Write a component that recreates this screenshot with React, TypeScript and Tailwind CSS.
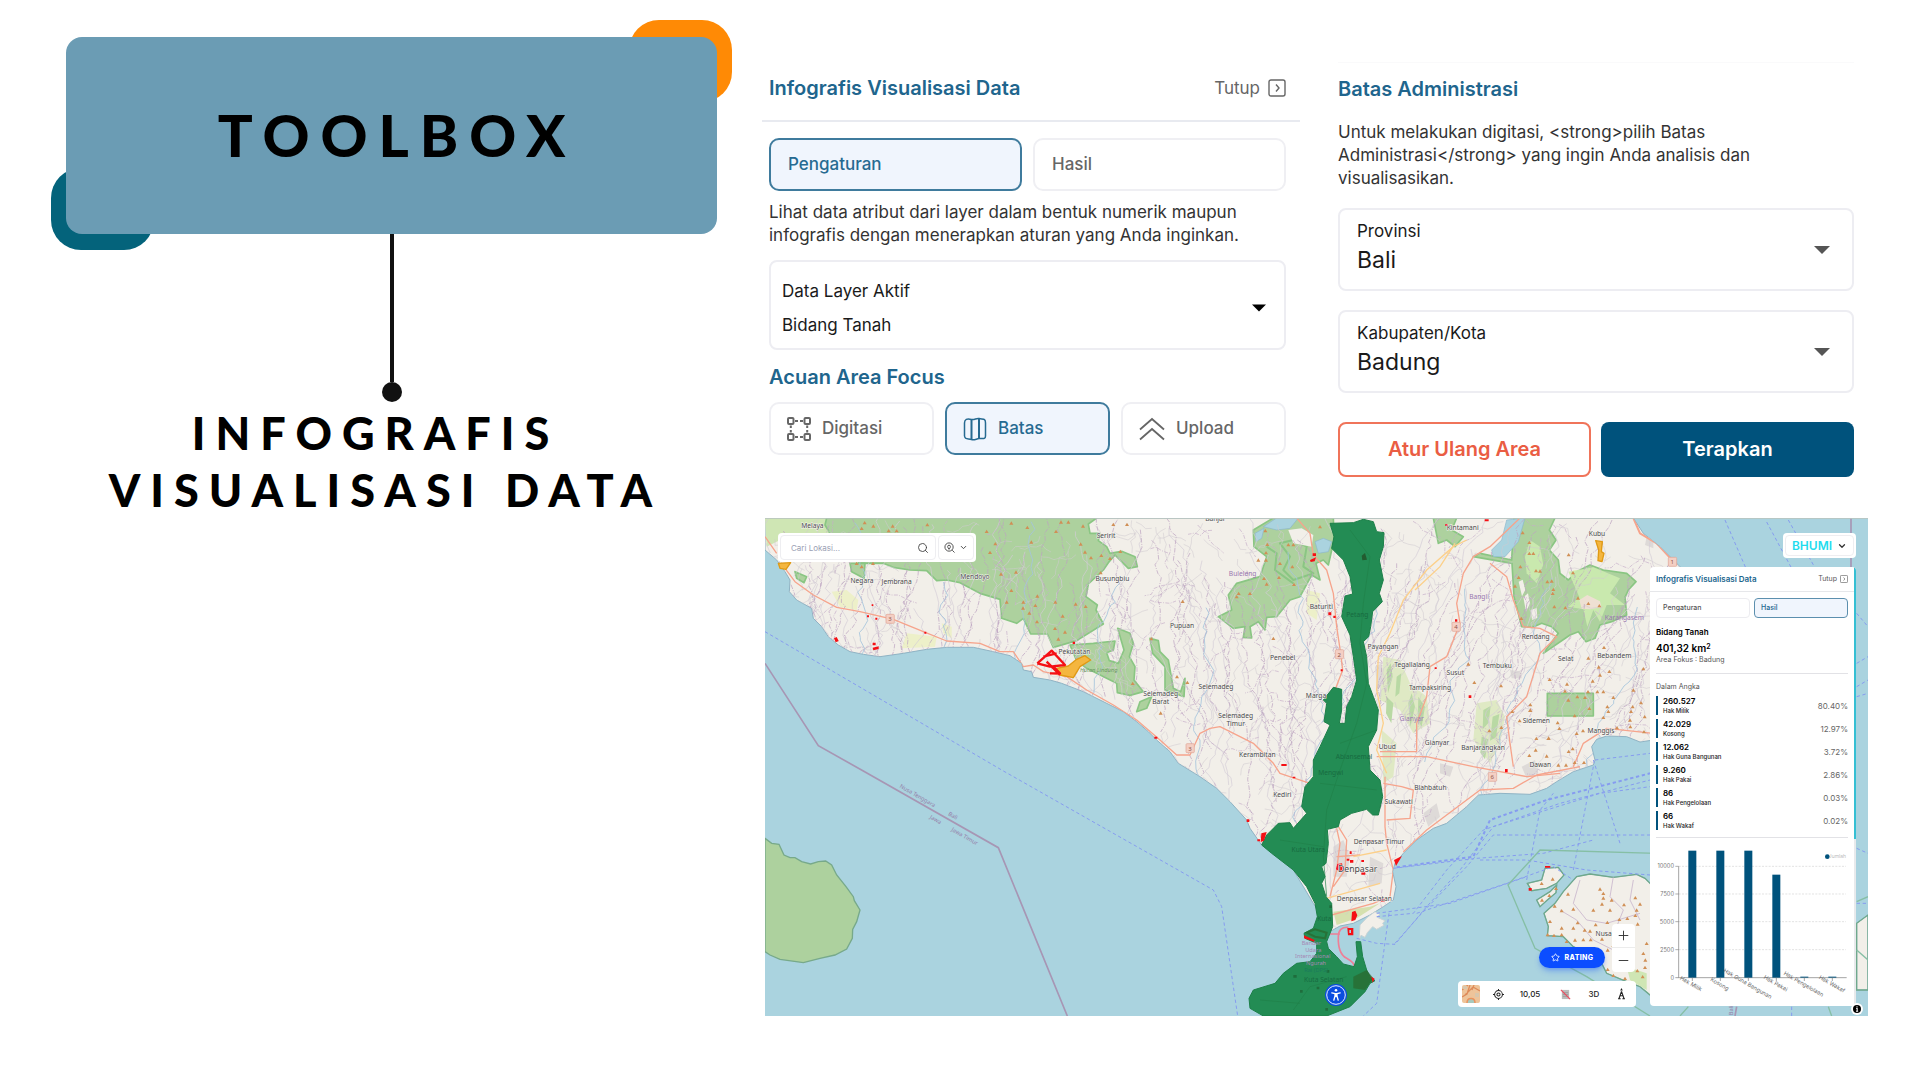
import React, { useId } from "react";
import { ChevronDown, Minus, Plus, Search, Star } from "lucide-react";

const INTER = "font-['Inter',sans-serif]";
const TAB_ON = "border-2 border-[#3f7b9d] bg-[#f0f5fd] text-[#266a91]";
const TAB_OFF = "border-2 border-[#efeff3] bg-white text-[#666]";

/* ---------- Map drawing ---------- */

function makeRandom(seed: number) {
  let s = seed;
  return () => {
    s = (s * 1664525 + 1013904223) % 4294967296;
    return s / 4294967296;
  };
}

function wander(seed: number, step: number, drift: number) {
  const r = makeRandom(seed);
  const out: string[] = [];
  for (let x = 20; x < 2760; x += step) {
    let cx = x + r() * 20;
    let y = r() * 300;
    const end = y + 250 + r() * 800;
    const lean = x > 1750 ? -0.35 : x > 1170 ? 0.12 : -0.05;
    let d = `M${cx.toFixed(0)} ${y.toFixed(0)}`;
    while (y < end) {
      const dy = 8 + r() * 20;
      y += dy;
      cx += (r() - 0.5) * drift + lean * dy;
      d += `L${cx.toFixed(0)} ${y.toFixed(0)}`;
    }
    out.push(d);
  }
  return out.join("");
}

function lanes(seed: number, count: number, reach: number) {
  const r = makeRandom(seed);
  let d = "";
  for (let i = 0; i < count; i++) {
    let x = r() * 2700;
    let y = 30 + r() * 1170;
    const heading = r() * Math.PI;
    d += `M${x.toFixed(0)} ${y.toFixed(0)}`;
    const n = 3 + Math.floor(r() * 5);
    for (let k = 0; k < n; k++) {
      const a = heading + (r() - 0.5) * 1.6;
      x += Math.cos(a) * reach;
      y += Math.sin(a) * reach;
      d += `L${x.toFixed(0)} ${y.toFixed(0)}`;
    }
  }
  return d;
}

const BORDERS = wander(7, 36, 30);
const TRACKS = wander(31, 48, 34);
const RIVERS = wander(93, 260, 30);
const LANES = lanes(5, 560, 18);
const PURPLE_LANES = lanes(77, 260, 20);

const LAND =
  "M15 24V120L50 150 75 185 90 210 88 245 110 270 155 295 160 325 185 350 205 380 235 405 270 425 310 433 360 440 430 430 500 418 560 412 640 412 700 425 750 437 785 460 790 480 815 485 820 502 870 510 905 520 970 545 1020 570 1090 605 1130 635 1165 665 1190 690 1230 725 1255 760 1320 800 1370 835 1410 875 1460 930 1470 955 1505 1005 1600 1080 1660 1180 1715 1262 1740 1248 1780 1240 1830 1215 1870 1190 1900 1170 1908 1130 1898 1085 1905 1060 1930 1030 1970 990 2020 955 2060 940 2120 890 2155 855 2220 850 2310 853 2360 835 2390 815 2440 785 2500 765 2505 750 2495 710 2510 688 2540 678 2600 680 2640 696 2680 690 2760 690V170L2700 110 2650 70 2620 24Z";

const PENIDA =
  "M2352 1210L2385 1180 2410 1145 2450 1100 2490 1092 2560 1102 2630 1093 2655 1105 2700 1150V1480L2640 1430 2600 1415 2540 1390 2520 1350 2440 1310 2410 1280 2362 1277 2365 1250Z";
const SMALL_ISLES =
  "M2302 1120L2345 1110 2355 1075 2395 1072 2412 1095 2390 1120 2360 1135 2315 1142ZM2330 1170L2370 1145 2390 1125 2388 1148 2362 1170 2340 1190ZM3290 1240L3324 1215V1440H3290Z";

const BADUNG =
  "M540 40L610 38 640 28 670 35 680 65 702 68 700 110 688 150 694 180 700 210 688 250 697 275 668 305 662 350 656 380 640 395 650 440 655 520 670 560 685 600 680 660 655 710 660 780 690 810 698 860 685 915 668 915 650 898 605 910 570 930 565 950 532 958 535 1000 528 1060 515 1070 525 1100 515 1120 528 1160 545 1180 548 1250 530 1295 535 1315 560 1340 580 1362 612 1370 622 1340 618 1295 632 1295 638 1340 650 1380 660 1400 675 1412 660 1420 645 1445 600 1490 530 1518H340L300 1495 297 1465 310 1440 375 1420 400 1390 440 1360 480 1355 500 1330 500 1300 465 1285 462 1270 490 1255 502 1220 495 1180 470 1130 430 1080 365 1030 335 1005 350 975 385 940 420 938 430 955 470 910 455 890 465 830 490 800 490 750 510 710 540 645 522 635 530 580 520 570 550 532 575 538 575 600 568 640 585 640 590 590 605 560 620 510 610 440 600 375 575 320 585 258 608 252 600 200 580 150 545 115 552 80Z";

const FORESTS = [
  "M200 24L195 45 210 70 300 160 370 160 400 172 450 180 500 182 530 212 560 210 600 218 660 250 720 268 725 325 770 340 790 325 812 372 862 372 880 412 950 392 1030 342 1008 300 1012 285 978 260 985 222 1030 180 1045 158 1065 135 1105 175 1132 170 1125 140 1085 124 1050 130 1040 110 1015 92 1020 70 990 70 985 42 1010 24Z",
  "M930 405L1000 400 1065 393 1060 420 1040 428 1048 452 1075 460 1092 420 1073 355 1110 370 1120 400 1108 440 1125 470 1122 510 1150 545 1110 556 1072 548 1070 520 1010 490 980 475 950 452Z",
  "M1130 605L1140 575 1175 560 1160 595Z",
  "M1480 60L1540 24H1720L1722 90 1705 165 1690 150 1668 160 1680 210 1655 195 1620 260 1590 270 1550 320 1520 322 1515 360 1495 335 1470 350 1475 384 1450 382 1455 350 1420 355 1375 320 1415 300 1405 255 1430 220 1500 200 1520 140 1482 110Z",
  "M2020 24H2090L2075 60 2110 80 2085 110 2060 90 2035 100Z",
  "M2262 24H2385L2368 60 2388 90 2368 120 2395 150 2400 190 2425 210 2450 185 2490 165 2530 180 2600 190 2628 215 2605 240 2595 262 2600 315 2555 335 2520 345 2505 385 2478 395 2455 365 2430 375 2350 430 2395 370 2375 350 2345 340 2318 352 2285 350 2262 260 2256 160 2140 140 2160 130 2255 150Z",
  "M2362 550H2500V618H2362Z",
  "M1170 385L1195 392 1200 425 1225 450 1240 535 1262 545 1275 505 1272 560 1215 540 1215 470 1178 430Z",
  "M105 185L140 200 132 218 110 205ZM270 160H315L312 205 275 185Z",
];

const PEAKS =
  "314 38 340 48 398 48 305 55 386 62 410 62 502 44 680 64 754 39 802 52 706 101 690 127 814 96 888 64 903 36 925 36 969 48 1060 43 1101 43 962 102 975 126 1024 136 993 143 1081 124 1050 145 768 186 723 192 754 241 832 258 740 276 790 276 826 286 789 294 808 309 886 276 947 282 977 289 908 318 831 335 885 355 915 366 895 387 1022 188 1174 386 1118 520 290 160 339 160 305 170 1202 609 1251 500 1282 517 1268 274 1540 385 1430 260 1436 250 1470 250 1518 150 1512 205 1557 202 1520 222 1602 223 1597 170 1560 160 1585 104 1600 104 1522 103 1518 128 1495 150 1516 62 1680 50 2125 462 2143 517 2223 527 2188 662 2224 652 2311 584 2310 601 2279 632 2329 685 2327 720 2308 736 2360 738 2366 684 2257 604 2288 68 2308 97 2308 130 2320 130 2328 182 2340 183 2362 215 2375 213 2380 238 2378 250 2383 290 2416 293 2454 264 2485 280 2518 287 2426 134 2439 188 2281 170 2276 202 2265 228 2284 325 2532 412 2485 444 2516 471 2548 484 2520 495 2498 513 2484 545 2512 545 2530 545 2542 590 2560 562 2620 540 2643 578 2618 590 2613 604 2654 620 2610 630 2611 650 2652 665 2571 653 2530 622 2444 617 2469 662 2450 670 2393 638 2365 685 2398 655 2438 716 2426 724 2395 765 2418 765 2444 757 2472 757 2311 600 2425 570 2452 560 2475 562 2488 595 2545 604 2415 543 2421 522 2369 508 2650 476 2345 1120 2378 1107 2368 1156 2388 1135 2346 1170 2384 1188 2424 1152 2520 1137 2530 1150 2530 1164 2526 1182 2555 1170 2592 1184 2626 1163 2640 1182 2630 1200 2626 1216 2500 1200 2550 1200 2440 1197 2405 1202 2370 1234 2363 1274 2382 1276 2405 1274 2405 1254 2440 1254 2453 1238 2474 1260 2490 1263 2507 1244 2542 1237 2578 1228 2602 1225 2633 1242 2420 1294 2445 1290 2470 1289 2492 1289 2526 1287 2543 1320 2560 1306 2650 1330 2656 1350 2660 1300 2543 1378 2560 1396 2632 1382 2648 1400 2655 1372 2595 1405"
    .split(" ")
    .map(Number);

let peakPath = "";
for (let i = 0; i < PEAKS.length; i += 2) {
  peakPath += `M${PEAKS[i]} ${PEAKS[i + 1] - 5}l6 10h-12z`;
}

const PLACES: [string, number, number, number?][] = [
  ["Melaya", 157, 55], ["Negara", 306, 220], ["Jembrana", 410, 221], ["Mendoyo", 645, 206], ["Seririt", 1038, 84],
  ["Busungbiu", 1057, 214], ["Pekutatan", 943, 432], ["Banjar", 1366, 34], ["Pupuan", 1266, 354], ["Baturiti", 1684, 298],
  ["Penebel", 1568, 449], ["Selemadeg", 1368, 538], ["Selemadeg", 1202, 558], ["Barat", 1202, 581], ["Selemadeg", 1427, 625],
  ["Timur", 1427, 648], ["Kerambitan", 1492, 742], ["Marga", 1668, 565], ["Payangan", 1869, 418], ["Tegallalang", 1956, 472],
  ["Susut", 2086, 496], ["Tembuku", 2212, 473], ["Tampaksiring", 2010, 541], ["Ubud", 1882, 718], ["Gianyar", 2031, 706],
  ["Banjarangkan", 2169, 720], ["Kintamani", 2108, 60], ["Rendang", 2327, 386], ["Selat", 2417, 454], ["Bebandem", 2563, 443],
  ["Sidemen", 2329, 638], ["Manggis", 2523, 670], ["Dawan", 2341, 771], ["Kubu", 2511, 77], ["Kediri", 1567, 861],
  ["Sukawati", 1916, 881], ["Blahbatuh", 2011, 841], ["Denpasar Timur", 1857, 1003], ["Denpasar Selatan", 1813, 1172],
  ["Denpasar", 1793, 1085, 26], ["Nusa", 2531, 1278],
];

const REGIONS: [string, number, number][] = [
  ["Buleleng", 1448, 198], ["Bangli", 2157, 267], ["Gianyar", 1955, 633], ["Karangasem", 2593, 329],
];

const GREEN_PLACES: [string, number, number][] = [
  ["Petang", 1792, 320], ["Abiansemal", 1782, 746], ["Mengwi", 1712, 796], ["Kuta Utara", 1645, 1026], ["Kuta", 1693, 1234], ["Kuta Selatan", 1691, 1416],
];

const SHIELDS: [string, number, number][] = [
  ["3", 390, 327], ["3", 1290, 715], ["2", 1738, 433], ["4", 2088, 351], ["6", 2197, 801], ["1", 2737, 156],
];

function BaliMap() {
  return (
    <svg viewBox="15 24 3309 1494" preserveAspectRatio="xMidYMid slice" className="block size-full bg-[#aad3df]" role="img" aria-label="Peta Bali">
      <defs>
        <clipPath id="land"><path d={LAND} /></clipPath>
        <clipPath id="penida"><path d={PENIDA} /></clipPath>
      </defs>

      <path d={LAND + PENIDA + SMALL_ISLES} fill="#f2efe9" stroke="#8fb3c4" strokeWidth="3" />
      <path d={PENIDA + SMALL_ISLES} fill="none" stroke="#6fa98c" strokeWidth="4" />

      <g clipPath="url(#land)">
        <path d="M15 24H210L225 75 200 100 60 90 20 110Z" fill="#cfe6b4" />
        <g fill="#edf0c9">
          <path d="M215 245L260 240 295 270 290 300 240 290Z" />
          <path d="M440 370L530 380 525 410 425 415Z" />
          <path d="M545 340L575 350 575 385 550 370Z" />
          <path d="M1640 240L1680 250 1670 330 1640 310Z" />
          <path d="M2440 180L2560 190 2540 240 2460 300 2420 240Z" />
        </g>
        <g fill="#dfe9c4">
          <path d="M1870 440L1920 450 1950 520 2000 560 2010 640 1960 670 1920 600 1860 570Z" />
          <path d="M1865 660L1910 700 1900 800 1870 820Z" />
          <path d="M2150 580L2210 570 2235 620 2220 700 2190 760 2140 690Z" />
        </g>
        <path d="M1720 1205L1830 1190 1860 1180 1790 1225 1730 1245Z" fill="#d5e0ae" />
        <g fill="#b9d9a4">
          <path d="M1880 480l12 -20 6 40 -14 50zM1910 500l14 -10 -6 60 -12 10zM1945 580l10 -30 10 40 -14 60zM1975 560l20 30 -10 60 -12 -20zM1880 560l20 20 -6 60 -16 -30zM2170 600l22 -12 -6 50 -18 20zM2198 620l20 -8 -10 70 -18 10zM2165 680l20 8 -10 60 -14 -20z" />
        </g>
        {FORESTS.map((d) => (
          <path key={d} d={d} fill="#add19e" stroke="#8ac683" strokeWidth="5" strokeLinejoin="round" />
        ))}
        <path d="M1560 100L1600 90 1640 110 1630 170 1660 190 1600 210 1570 180 1590 140ZM1520 110L1550 130 1545 180 1600 220" fill="none" stroke="#8ac683" strokeWidth="6" strokeLinejoin="round" />
        <path d="M1585 60L1625 55 1660 75 1655 110 1600 100Z" fill="#f2efe9" />
        <g fill="#cdebb0" opacity="0.9">
          <path d="M2425 185L2500 172 2580 205 2550 250 2595 285 2540 285 2520 335 2500 300 2482 350 2470 298 2425 290 2458 262Z" />
          <path d="M2310 90L2340 110 2350 165 2330 220 2300 190 2295 140Z" />
        </g>
        <g fill="#f2efe9">
          <path d="M2276 215l12 -6 8 30 -10 20zM2290 262l14 -12 6 30 -12 26zM2312 300l18 -6 2 30 -16 6z" />
        </g>
        <path d="M2458 270L2482 255 2520 274 2524 292 2490 298 2465 296Z" fill="#eee0d2" />
        <g fill="#aad3df" stroke="#8db7cc" strokeWidth="2">
          <path d="M1510 50L1550 24H1615L1590 55 1550 60Z" />
          <path d="M1485 70L1512 55 1505 85 1488 95Z" />
          <path d="M1665 95L1690 85 1715 95 1705 125 1675 130Z" />
          <path d="M2240 30L2295 24 2275 95 2235 140 2200 140 2195 120 2225 90Z" />
        </g>
        <g fill="#dedad8">
          <path d="M1845 470l20 -10 5 60 -18 20zM1990 910l40 -30 10 40 -35 30zM2040 760l40 10 -10 30 -30 -10zM2285 770l40 -20 10 40 -35 15zM1720 1010l30 -20 20 50 -10 60 -40 0zM1830 1040l40 20 -5 60 -40 10zM2250 480l35 5 0 20 -30 0zM2660 80l20 5 0 30 -25 -10z" />
        </g>
        <path d={LANES} fill="none" stroke="#cfcad0" strokeWidth="2" opacity="0.8" />
        <path d={TRACKS} fill="none" stroke="#d3ccd6" strokeWidth="2.5" opacity="0.8" />
        <path d={PURPLE_LANES} fill="none" stroke="#c5adc8" strokeWidth="2.5" strokeDasharray="12 4 3 4" opacity="0.8" />
        <path d={BORDERS} fill="none" stroke="#bda3c1" strokeWidth="2.5" strokeDasharray="14 4 3 4" opacity="0.85" />
        <path d={RIVERS} fill="none" stroke="#a5c4dc" strokeWidth="2.5" />
        <g fill="none" stroke="#f6a48c" strokeWidth="4" strokeLinejoin="round">
          <path d="M15 80L50 130M75 175L105 215 160 255 230 292 300 305 400 328 490 365 560 393 660 400 720 425 760 425 790 470 820 465 850 485 920 500 980 540 1060 585 1130 630 1200 690 1250 735 1290 735 1320 670 1350 655 1380 650 1440 680 1480 700 1540 760 1560 790 1650 820" />
          <path d="M1610 24L1650 70 1660 135 1700 180 1720 250 1730 350 1742 430 1748 480 1725 540" />
          <path d="M2280 24L2190 110 2140 140 2110 190 2090 280 2100 340 2060 440 2010 470 2000 560 1970 640 1970 725 1860 725" />
          <path d="M2190 160L2240 200 2260 270 2290 350 2340 355 2390 380 2340 430 2300 560 2240 620 2250 700 2260 770" />
          <path d="M1850 740L2000 740 2140 770 2300 800 2400 790" />
          <path d="M1870 820L1925 830 1960 840 1950 925 1880 930M1875 800L1875 950 1880 1000 1900 1080 1890 1160" />
          <path d="M1930 1025L2000 960 2080 900 2160 840 2260 835 2330 795 2460 770" />
          <path d="M1730 955L1740 1000 1730 1080 1710 1160M1735 950L1760 990 1755 1080 1720 1130M1715 1215L1840 1180 1875 1165M1730 1040L1800 1035" />
          <path d="M2440 770L2470 700 2540 655 2680 670" />
          <path d="M2620 24L2640 70 2690 100 2750 165" strokeWidth="6" />
        </g>
        <path d="M2120 90L2080 110 2000 180 1930 270 1890 370 1855 440 1850 540 1870 640 1850 720 1880 790" fill="none" stroke="#fcd08a" strokeWidth="4" />
        <path d="M2085 100L2040 170 1965 240M1780 1040L1880 1020M1700 1165L1860 1120" fill="none" stroke="#fcd08a" strokeWidth="4" />
      </g>

      <g clipPath="url(#penida)" fill="none" stroke="#c9b6cc" strokeWidth="2.5">
        <path d="M2560 1100L2550 1160 2590 1200 2570 1250 2620 1290M2460 1110L2440 1180 2480 1230 2540 1240 2640 1210M2400 1200L2450 1230 2500 1290 2580 1330M2620 1110L2610 1170 2640 1230" />
        <path d="M2600 1370l60 20v50l-50 -30z" fill="#cfe6b4" stroke="none" />
      </g>

      <path d="M1797 1290L1800 1245 1822 1222 1845 1205 1860 1212 1852 1222 1875 1232 1868 1240 1872 1246 1850 1258 1838 1250 1822 1268 1815 1282 1803 1276Z" fill="#f2efe9" stroke="#c8d3d5" strokeWidth="3" />
      <path d="M1710 1272H1740M1765 1252Q1735 1250 1735 1280Q1733 1330 1760 1345T1782 1372" fill="none" stroke="#ef7f97" strokeWidth="5" />
      <path d="M15 985L35 1000 57 1003 72 1035 90 1043 105 1043 125 1055 152 1062 175 1055 197 1053 215 1065 230 1095 258 1130 280 1160 283 1172 300 1200 290 1235 278 1258 277 1285 260 1317 225 1335 180 1345 130 1358 60 1348 30 1335 15 1325Z" fill="#add19e" stroke="#77a98a" strokeWidth="4" />

      <g fill="none" stroke="#869cf0" strokeWidth="3" strokeDasharray="10 8">
        <path d="M15 365L725 780 1360 1140 1385 1190 1433 1518" />
        <path d="M1900 1075L2150 1045 2350 1030 2500 990" />
        <path d="M1910 1072L2140 1040 2190 930 2360 870 2670 790" strokeWidth="6" />
        <path d="M1850 1220L1960 1210 2060 1080 2170 960 2400 880 2670 810" />
        <path d="M1790 1285L1850 1300 1905 1303 2000 1190 2100 1080 2200 950 2520 850 2670 830" />
        <path d="M1905 1300L1985 1210 2120 1070 2200 975 2670 975" />
        <path d="M1850 1210L2070 1180 2300 1100M1970 1210L2240 1120 2380 1070 2440 1110" />
        <path d="M2160 1050L2300 1050 2480 1080 2670 1095M2300 1110L2340 900 2380 850" />
        <path d="M2440 1080L2500 770M2500 750L2580 1000M2505 750L2670 730" />
        <path d="M1887 1210L1850 1480 1810 1518M3095 1518V1490" />
        <path d="M3020 36L3130 240M2895 30L2960 180M3085 30L3230 290M3290 310L3324 350M3290 460L3324 440M3290 530L3324 510M3290 560L3324 550" />
        <path d="M3290 1015L3324 1030M3290 1180H3324" />
      </g>
      <g fill="none" stroke="#86bfa5" strokeWidth="4">
        <path d="M2690 1030L2340 1020 2244 1125 2325 1315 2480 1400 2670 1518M3290 1175L3324 1160M3290 1320L3324 1350M2785 1490L2760 1518M3205 1490L3215 1518" />
      </g>
      <g fill="none" stroke="#a796b4" strokeWidth="5">
        <path d="M15 460L175 707 310 783 715 1013 922 1518" />
        <path d="M3273 24V180M2930 1490L2925 1518" />
      </g>

      <path d={peakPath} fill="#d08f55" />

      <g fill="#f4b63f" stroke="#e09a14" strokeWidth="4" strokeLinejoin="round">
        <path d="M890 475L925 468 950 448 975 437 992 450 960 470 940 503 900 495Z" />
        <path d="M2507 92L2527 95 2524 125 2532 130 2526 155 2514 152 2516 120Z" />
        <path d="M55 160L92 158 78 178 60 175Z" />
      </g>
      <g fill="none" stroke="#f50f14" strokeWidth="7" strokeLinejoin="round">
        <path d="M832 460L875 422 915 465 870 470 832 460M850 440L890 430M870 490H900L880 470M860 455L900 495" />
      </g>

      <path d={BADUNG} transform="translate(1170 0)" fill="#238c54" stroke="#1d8049" strokeWidth="3" strokeLinejoin="round" />
      <g fill="none" stroke="#1f8049" strokeWidth="2">
        <path d="M1770 60L1830 140 1810 280 1800 400 1820 520 1790 640 1740 780 1700 900 1690 1040 1700 1160M1740 700L1850 660M1680 820L1850 840M1560 990L1690 1010M1600 1500L1650 1430 1760 1400M1500 1470L1620 1480" />
      </g>
      <path d="M1640 1268L1665 1258 1700 1268 1695 1285 1665 1280Z" fill="none" stroke="#2a6a2f" strokeWidth="6" opacity="0.75" />
      <path d="M1780 1400L1820 1380 1840 1405 1815 1440 1780 1435Z" fill="#2a6a2f" opacity="0.75" />
      <path d="M1805 137l10 -8 6 20 -14 2z" fill="#235c30" />
      <g fill="#1f6d3c">
        <path d="M1600 1395h10v8h-10zM1700 1380h8v8h-8zM1670 1430h8v8h-8zM1696 1494h8v8h-8zM1708 1186h8v8h-8zM1620 1440h8v8h-8z" />
      </g>

      <g fill="#f50f14">
        <path d="M222 385l8 -4 6 12 -9 4zM338 398h9v8h-9zM338 413l18 -4v8l-16 4zM321 316h6v6h-6zM346 323h6v6h-6zM335 283h5v5h-5zM493 365h6v6h-6zM938 395h7v7h-7z" />
        <path d="M1650 150l18 -8 -4 12 -12 2zM1658 130h10v8h-10zM1705 307h9v9h-9zM1720 317h7v7h-7zM1742 478h6v6h-6zM1183 680h9v6h-9zM1564 762h16v6h-16zM1598 800h8v5h-8z" />
        <path d="M1460 928h8v8h-8zM1504 970l16 -4 -8 26 -10 4zM1492 988h8v6h-8z" />
        <path d="M1732 1062l14 -2 4 18 -8 8 -14 -8zM1769 1024h6v8h-6zM1770 1050h10v8h-10zM1804 1050h8v6h-8zM1804 1086h12v8h-12zM1826 990h8v8h-8zM1862 1167h12v8h-12zM1760 1046h8v6h-8z" />
        <path d="M1902 1050l24 -12 -18 30zM1776 1206l10 -4 6 14 -6 14 -12 4zM1762 1254h18v22h-16z" />
        <path d="M2085 328h7v7h-7zM2126 556h8v8h-8zM2056 42h8v6h-8zM2174 28h12v6h-12zM2235 777h8v10h-8zM2024 472h6v5h-6zM2355 1068h16v5h-16zM2306 1134h9v8h-9zM1834 1400l10 6 -6 12zM1632 1276l32 14 -2 5 -30 -10z" />
      </g>
      <path d="M1768 1260h5v9h-5z" fill="#aad3df" />

      <g fontFamily="'Noto Sans', sans-serif" textAnchor="middle">
        <g fill="#9a78b0" fontSize="20">
          {REGIONS.map(([t, x, y]) => <text key={t} x={x} y={y}>{t}</text>)}
        </g>
        <g fill="#176b40" fontSize="20">
          {GREEN_PLACES.map(([t, x, y]) => <text key={t} x={x} y={y}>{t}</text>)}
        </g>
        <g fill="#48484a" stroke="#f7f5f1" strokeWidth="3" paintOrder="stroke" fontSize="20">
          {PLACES.map(([t, x, y, s]) => <text key={t + x} x={x} y={y} fontSize={s ?? 20}>{t}</text>)}
        </g>
        <text x="1016" y="486" fontSize="17" fontStyle="italic" fill="#6d9a63">Hutan Lindung</text>
        <g fill="#a588b5" fontSize="17">
          <text x="1654" y="1305">Bandar</text>
          <text x="1660" y="1325">Udara</text>
          <text x="1658" y="1345">Internasional</text>
          <text x="1668" y="1364">Ngurah</text>
        </g>
        <text x="1668" y="1385" fontSize="17" fill="#1c7a5c">Rai (DPS)</text>
        <g fill="#957da8" fontSize="17">
          <text transform="translate(470 862) rotate(30)">Nusa Tenggara</text>
          <text transform="translate(576 922) rotate(30)">Bali</text>
          <text transform="translate(524 934) rotate(30)">Jawa</text>
          <text transform="translate(611 984) rotate(30)">Jawa Timur</text>
          <text transform="translate(2918 1501) rotate(-90)">Bali</text>
        </g>
        {SHIELDS.map(([t, x, y]) => (
          <g key={t + x}>
            <rect x={x - 12} y={y - 14} width="25" height="27" rx="3" fill="#f4cfc4" stroke="#e0a594" strokeWidth="2" />
            <text x={x} y={y + 7} fontSize="18" fill="#8e5346">{t}</text>
          </g>
        ))}
      </g>
      <path d="M15 25H3324" stroke="#b9c4c0" strokeWidth="3" />
    </svg>
  );
}

/* ---------- Icons ---------- */

function CloseBox({ className }: { className: string }) {
  return (
    <svg viewBox="0 0 18 18" className={className} fill="none" stroke="currentColor" strokeWidth="1.4" aria-hidden="true">
      <rect x="1" y="1" width="16" height="16" rx="2" />
      <path d="M8 5.5l3 3.5-3 3.5" />
    </svg>
  );
}

function NodesIcon() {
  return (
    <svg viewBox="0 0 24 24" className="size-6" fill="none" stroke="currentColor" strokeWidth="2" aria-hidden="true">
      <rect x="1" y="1" width="5.5" height="6" rx="1" />
      <rect x="17.5" y="1" width="5.5" height="6" rx="1" />
      <rect x="1" y="17" width="5.5" height="6" rx="1" />
      <rect x="17.5" y="17" width="5.5" height="6" rx="1" />
      <path d="M8 4h3M13 4h3M8 20h3M13 20h3M3.800 8.500v2.500M3.800 13v2.500M20.200 8.500v2.500M20.200 13v2.500" />
    </svg>
  );
}

function FoldedMapIcon() {
  return (
    <svg viewBox="0 0 24 24" className="size-6" fill="none" stroke="currentColor" strokeWidth="1.5" strokeLinejoin="round" aria-hidden="true">
      <path d="M8.500 22.500C6 21 2 23.500 1.500 19V6C1.500 2.500 4 1 8.500 2.500C12 3 13 1 16 1.500C20 2.500 22.500 1 22.500 6V19C22.500 23 19 21 16 21.500C13 22 11 23.500 8.500 22.500Z" />
      <path d="M8.500 2.500v20M16 1.500v20" strokeWidth="2" />
    </svg>
  );
}

function AccessIcon() {
  return (
    <svg viewBox="0 0 22 22" className="size-full" aria-hidden="true">
      <circle cx="11" cy="11" r="11" fill="#0b4de0" />
      <circle cx="11" cy="11" r="9.300" fill="none" stroke="#fff" strokeWidth="0.900" />
      <circle cx="11" cy="6.300" r="1.300" fill="#fff" />
      <path d="M6.800 8.800L10 9.600H12L15.200 8.800M10 9.600V12L8.800 16.200M12 9.600V12L13.200 16.200M11 9.600V12.500" fill="none" stroke="#fff" strokeWidth="1.300" strokeLinecap="round" strokeLinejoin="round" />
    </svg>
  );
}

/* ---------- Form panels ---------- */

function SelectCard({ label, value, arrow, big }: { label: string; value: string; arrow: string; big?: boolean }) {
  const id = useId();
  return (
    <div className={big ? "relative h-[83px] rounded-lg border-2 border-[#ededf2] px-[17px] pt-[9px]" : "relative h-[90px] rounded-lg border-2 border-[#ededf2] px-[11px] pt-3"}>
      <label htmlFor={id} className={big ? "block text-[17px] leading-6 text-[#1a1a1a]" : "block text-[17px] leading-[34px] text-[#1a1a1a]"}>{label}</label>
      <select
        id={id}
        defaultValue={value}
        className={big ? "block w-full appearance-none bg-transparent text-[23px] leading-[34px] text-[#1a1a1a] outline-none" : "block w-full appearance-none bg-transparent text-[17px] leading-[34px] text-[#1a1a1a] outline-none"}
      >
        <option>{value}</option>
      </select>
      <svg viewBox="0 0 16 8" className={`pointer-events-none absolute ${arrow}`} fill="currentColor" aria-hidden="true">
        <path d="M0 0h16L8 8z" />
      </svg>
    </div>
  );
}

function SettingsPanel() {
  return (
    <section className="min-w-0 flex-[538] pt-[76px]">
      <header className="flex items-center justify-between border-b-2 border-[#e8eaf0] pr-[14px] pb-5 pl-[7px]">
        <h2 className="text-[20px] leading-6 font-semibold text-[#20658d]">Infografis Visualisasi Data</h2>
        <button className="flex items-center gap-2 text-[17px] leading-6 text-[#666]">
          Tutup
          <CloseBox className="size-[18px]" />
        </button>
      </header>
      <div className="pr-[14px] pl-[7px]">
        <div className="mt-4 grid grid-cols-2 gap-[11px] text-[17px] font-medium">
          <button className={`h-[53px] rounded-[10px] px-[17px] text-left ${TAB_ON}`}>Pengaturan</button>
          <button className={`h-[53px] rounded-[10px] px-[17px] text-left ${TAB_OFF}`}>Hasil</button>
        </div>
        <p className="mt-[10px] mb-[13px] text-[17px] leading-[23px] text-[#333]">
          Lihat data atribut dari layer dalam bentuk numerik maupun infografis dengan menerapkan aturan yang Anda inginkan.
        </p>
        <SelectCard label="Data Layer Aktif" value="Bidang Tanah" arrow="top-[42px] right-[18px] h-[8px] w-[14px] text-black" />
        <h2 className="mt-[15px] text-[20px] leading-6 font-semibold text-[#20658d]">Acuan Area Focus</h2>
        <div className="mt-[13px] grid grid-cols-3 gap-[11px] text-[17px] font-medium">
          <button className={`flex h-[53px] items-center gap-[11px] rounded-[10px] px-4 ${TAB_OFF}`}><NodesIcon />Digitasi</button>
          <button className={`flex h-[53px] items-center gap-[11px] rounded-[10px] px-4 ${TAB_ON}`}><FoldedMapIcon />Batas</button>
          <button className={`flex h-[53px] items-center gap-[11px] rounded-[10px] px-4 ${TAB_OFF}`}>
            <svg viewBox="0 0 26 24" className="h-6 w-[26px]" fill="none" stroke="currentColor" strokeWidth="1.800" aria-hidden="true">
              <path d="M1 12.500L13 2l12 10.500M1 22.500L13 12l12 10.500" />
            </svg>
            Upload
          </button>
        </div>
      </div>
    </section>
  );
}

function BoundaryPanel() {
  return (
    <section className="mr-[14px] min-w-0 flex-[516] pt-[62px]">
      <div className="border-t border-[#fafafb] pt-[14px]">
        <h2 className="text-[20px] leading-6 font-semibold text-[#20658d]">Batas Administrasi</h2>
        <p className="mt-5 pr-16 text-[17px] leading-[23px] text-[#333]">
          {"Untuk melakukan digitasi, <strong>pilih Batas Administrasi</strong> yang ingin Anda analisis dan visualisasikan."}
        </p>
        <div className="mt-[18px] flex flex-col gap-[19px]">
          <SelectCard big label="Provinsi" value="Bali" arrow="top-[36px] right-[22px] h-[8px] w-4 text-[#555]" />
          <SelectCard big label="Kabupaten/Kota" value="Badung" arrow="top-[36px] right-[22px] h-[8px] w-4 text-[#555]" />
        </div>
        <div className="mt-[29px] grid grid-cols-2 gap-[10px] text-[20px] font-semibold">
          <button className="h-[55px] rounded-lg border-2 border-[#f0745a] pb-[2px] text-[#ea5d43]">Atur Ulang Area</button>
          <button className="h-[55px] rounded-lg bg-[#00527c] pb-[2px] text-white">Terapkan</button>
        </div>
      </div>
    </section>
  );
}

/* ---------- Map overlays ---------- */

const ROWS = [
  ["260.527", "Hak Milik", "80.40%"],
  ["42.029", "Kosong", "12.97%"],
  ["12.062", "Hak Guna Bangunan", "3.72%"],
  ["9.260", "Hak Pakai", "2.86%"],
  ["86", "Hak Pengelolaan", "0.03%"],
  ["66", "Hak Wakaf", "0.02%"],
];

const BARS = [
  { name: "Hak Milik", x: 757, top: 272 },
  { name: "Kosong", x: 841, top: 272 },
  { name: "Hak Guna Bangunan", x: 925, top: 272 },
  { name: "Hak Pakai", x: 1009, top: 344 },
  { name: "Hak Pengelolaan", x: 1093, top: 650 },
  { name: "Hak Wakaf", x: 1177, top: 650 },
];
const LABEL_MIDDLES = [[750, 676], [836, 677], [920, 676], [1004, 675], [1088, 677], [1173, 677]];

function ResultChart() {
  return (
    <svg viewBox="648 234 576 500" className="block w-full" fontFamily="Inter, sans-serif" role="img" aria-label="Jumlah per jenis hak">
      {[319, 402, 485, 569].map((y, i) => (
        <g key={y}>
          <path d={`M716 ${y}H1218`} stroke="#dcdcdc" strokeWidth="2.500" strokeDasharray="6 4" />
          <path d={`M706 ${y}h10`} stroke="#888" strokeWidth="2" />
          <text x="702" y={y + 6} fontSize="17" textAnchor="end" fill="#777">{10000 - i * 2500}</text>
        </g>
      ))}
      <text x="702" y="659" fontSize="17" textAnchor="end" fill="#777">0</text>
      <path d="M716 319V653M706 653H1220" stroke="#777" strokeWidth="2" />
      {BARS.map((b, i) => (
        <g key={b.name}>
          <rect x={b.x - 12} y={b.top} width="24" height={653 - b.top} fill="#00527c" />
          <path d={`M${b.x} 653v10`} stroke="#777" strokeWidth="2" />
          <text transform={`translate(${LABEL_MIDDLES[i][0]} ${LABEL_MIDDLES[i][1]}) rotate(30)`} fontSize="17" textAnchor="middle" fill="#666">{b.name}</text>
        </g>
      ))}
      <circle cx="1162" cy="290" r="7" fill="#00527c" />
      <text x="1218" y="295" fontSize="15" textAnchor="end" fill="#bbb">Jumlah</text>
    </svg>
  );
}

function ResultPanel() {
  return (
    <aside className="absolute top-[49px] right-3 bottom-[10px] flex w-[206px] overflow-hidden rounded bg-white">
      <div className="min-w-0 flex-1">
        <header className="flex h-[25px] items-center justify-between border-b border-[#e6e7ea] px-[6px]">
          <h3 className="text-[8px] leading-3 font-semibold text-[#20658d]">Infografis Visualisasi Data</h3>
          <button className="flex items-center gap-[3px] text-[7px] leading-3 text-[#555]">Tutup<CloseBox className="size-[8px]" /></button>
        </header>
        <div className="px-[6px]">
          <div className="mt-[6px] grid grid-cols-2 gap-1 text-[7px] font-medium">
            <button className="h-5 rounded border border-[#ececf0] px-[6px] text-left text-[#555]">Pengaturan</button>
            <button className="h-5 rounded border border-[#5c8fae] bg-[#f0f5fd] px-[6px] text-left text-[#20658d]">Hasil</button>
          </div>
          <h4 className="mt-2 text-[8px] leading-3 font-semibold text-black">Bidang Tanah</h4>
          <p className="mt-[3px] text-[10px] leading-[14px] font-semibold text-black">401,32 km<sup className="text-[7px]">2</sup></p>
          <p className="text-[7px] leading-[10px] text-[#555]">Area Fokus : Badung</p>
          <hr className="mt-2 border-[#e2e2e6]" />
          <p className="mt-2 text-[7px] leading-[10px] text-[#555]">Dalam Angka</p>
          <ul className="mt-1 flex flex-col gap-1">
            {ROWS.map(([n, name, pct]) => (
              <li key={name} className="flex h-[19px] items-center justify-between">
                <div className="h-full border-l-2 border-[#00527c] pl-[5px]">
                  <p className="text-[8px] leading-[10px] font-semibold text-black">{n}</p>
                  <p className="text-[6px] leading-[9px] font-medium text-[#222]">{name}</p>
                </div>
                <span className="text-[8px] leading-[10px] text-[#666]">{pct}</span>
              </li>
            ))}
          </ul>
          <hr className="mt-[7px] border-[#e2e2e6]" />
          <ResultChart />
        </div>
      </div>
      <div className="w-[2px] bg-[#e8eaec]"><div className="h-[62%] bg-[#35bfd3]" /></div>
    </aside>
  );
}

function MapView() {
  return (
    <section className="relative mt-[41px] ml-[3px] h-[498px] overflow-hidden">
      <BaliMap />

      <form className="absolute top-[15px] left-[13px] flex h-[29px] w-[198px] gap-[2px] rounded bg-white p-[2px]">
        <div className="flex flex-1 items-center rounded border border-[#eeeef1] pr-[6px] pl-[10px]">
          <input aria-label="Cari Lokasi" placeholder="Cari Lokasi..." className="w-full min-w-0 flex-1 bg-transparent text-[8px] leading-3 outline-none placeholder:text-[#9aa0b4]" />
          <button type="button" aria-label="Cari"><Search className="size-3 text-[#444]" strokeWidth={1.8} /></button>
        </div>
        <button type="button" aria-label="Jenis pencarian" className="flex w-9 items-center justify-center gap-1 rounded border border-[#eeeef1] text-[#444]">
          <svg viewBox="0 0 24 24" className="size-[11px]" fill="none" stroke="currentColor" strokeWidth="2" aria-hidden="true">
            <circle cx="11" cy="11" r="9" />
            <path d="M18 18l5 5" />
            <path d="M11 16c-2-3-3-4-3-6a3 3 0 016 0c0 2-1 3-3 6z" />
          </svg>
          <ChevronDown className="size-[9px]" strokeWidth={2.5} />
        </button>
      </form>

      <button className="absolute top-[15px] right-3 h-[25px] w-[73px] rounded bg-white p-[2px]">
        <span className="flex h-full items-center justify-center gap-[5px] rounded border border-[#eeeef1]">
          <span className="text-[12px] leading-3 font-semibold text-[#1fdcee]">BHUMI</span>
          <ChevronDown className="size-[10px] text-[#333]" strokeWidth={3} />
        </span>
      </button>

      <ResultPanel />

      <div className="absolute right-[233px] bottom-[44px] flex w-[23px] flex-col divide-y divide-[#ececec] rounded bg-white text-[#333]">
        <button aria-label="Perbesar" className="flex h-6 items-center justify-center"><Plus className="size-[15px]" strokeWidth={1.5} /></button>
        <button aria-label="Perkecil" className="flex h-6 items-center justify-center"><Minus className="size-[15px]" strokeWidth={1.5} /></button>
      </div>

      <button className="absolute right-[263px] bottom-[48px] flex h-[21px] w-[66px] items-center justify-center gap-[5px] rounded-full bg-[#0b4dff] text-[7px] leading-3 font-extrabold tracking-wider text-white shadow-md shadow-[#0b4dff]/30">
        <Star className="size-[9px]" strokeWidth={2.2} />
        RATING
      </button>

      <div className="absolute right-[232px] bottom-[9px] grid h-[26px] w-[178px] grid-cols-[26px_28px_36px_34px_24px_1fr] items-center justify-items-center rounded bg-white text-[8px] font-medium text-[#222]">
        <button aria-label="Peta dasar" className="size-[18px] overflow-hidden rounded-[2px]">
          <svg viewBox="0 0 18 18" className="size-full" aria-hidden="true">
            <path d="M0 0h18v18H0z" fill="#eec49a" />
            <path d="M0 5l6-5M3 10l8-8 7 4M12 0l-2 5M0 12l5-3 3-9" fill="none" stroke="#de8b5a" strokeWidth="1.300" />
            <path d="M5 18c0-6 8-6 8 0" fill="#a8c9bd" stroke="#e9935f" strokeWidth="1.500" />
            <path d="M1 1h4v3H1zM13 8h4v4h-4z" fill="#d9c7ad" />
          </svg>
        </button>
        <button aria-label="Lokasi saya">
          <svg viewBox="0 0 24 24" className="size-[11px]" fill="none" stroke="currentColor" strokeWidth="2.200" aria-hidden="true">
            <circle cx="12" cy="12" r="8.500" /><circle cx="12" cy="12" r="3.500" />
            <path d="M12 0v4M12 20v4M0 12h4M20 12h4" />
          </svg>
        </button>
        <span>10,05</span>
        <button aria-label="Gambar mati">
          <svg viewBox="0 0 12 12" className="size-[11px]" aria-hidden="true">
            <path d="M2 1h8v10H2z" fill="#bcbcbc" />
            <path d="M3 4h6M3 6h6M3 8h6" stroke="#8d8d8d" strokeWidth="0.700" />
            <path d="M1 1l10 10" stroke="#ef4a5e" strokeWidth="1.300" />
          </svg>
        </button>
        <button>3D</button>
        <button aria-label="Utara">
          <svg viewBox="0 0 10 14" className="h-3 w-[9px]" aria-hidden="true">
            <path d="M5 0l1.500 3h-3z" fill="#222" />
            <path d="M5 4L2 12.500M5 4l3 8.500M1 12.500h3M6 12.500h3M3.500 9h3" fill="none" stroke="#222" strokeWidth="1.300" />
          </svg>
        </button>
      </div>

      <button aria-label="Aksesibilitas" className="absolute bottom-[10px] left-[51.8%] size-[22px] -translate-x-1/2"><AccessIcon /></button>

      <button aria-label="Info" className="absolute right-[5px] bottom-[1px] size-3 rounded-full bg-white p-[2px]">
        <svg viewBox="0 0 10 10" className="size-full" aria-hidden="true">
          <circle cx="5" cy="5" r="5" fill="#000" />
          <path d="M5 1.500v1.500M4 4.500h1.200v3M3.800 7.800h2.600" fill="none" stroke="#fff" strokeWidth="1.300" />
        </svg>
      </button>
    </section>
  );
}

/* ---------- Page ---------- */

export default function App() {
  return (
    <main className={`grid min-h-screen grid-cols-[762fr_1158fr] bg-white ${INTER}`}>
      <section className="pt-[37px] pr-[45px] pl-[66px] font-['Lato',sans-serif] font-black text-black">
        <div className="relative isolate">
          <div className="absolute -top-[17px] -right-[15px] -z-10 h-[82px] w-[103px] rounded-[30px] bg-[#ff8a05]" />
          <div className="absolute -bottom-[16px] -left-[15px] -z-10 h-[82px] w-[103px] rounded-[30px] bg-[#04637b]" />
          <h1 className="flex h-[197px] items-center justify-center rounded-2xl bg-[#6b9cb4] pb-[2px] pl-[11px] text-[58px] leading-[70px] tracking-[11px]">TOOLBOX</h1>
        </div>
        <div className="mx-auto flex w-5 flex-col items-center">
          <div className="h-[148px] w-1 bg-[#111]" />
          <div className="size-5 rounded-full bg-[#111]" />
        </div>
        <h2 className="mt-[3px] text-center text-[45px] leading-[57px] tracking-[10px]">
          <span className="block pr-8">INFOGRAFIS</span>
          <span className="block pr-3 whitespace-nowrap">VISUALISASI DATA</span>
        </h2>
      </section>

      <div className="min-w-0 pr-[52px] pb-16">
        <div className="flex gap-[38px]">
          <SettingsPanel />
          <BoundaryPanel />
        </div>
        <MapView />
      </div>
    </main>
  );
}
